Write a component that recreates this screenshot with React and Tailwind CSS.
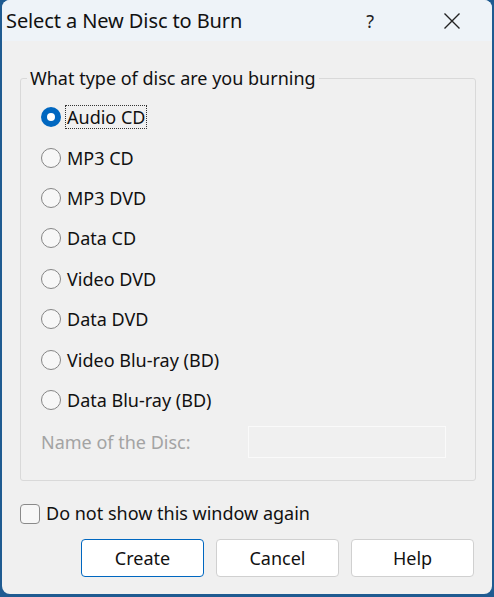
import React from "react";

const options = [
  "Audio CD",
  "MP3 CD",
  "MP3 DVD",
  "Data CD",
  "Video DVD",
  "Data DVD",
  "Video Blu-ray (BD)",
  "Data Blu-ray (BD)",
];

function Radio({ checked }) {
  if (checked) {
    return (
      <span className="w-[20px] h-[20px] rounded-full bg-[#0067c0] flex items-center justify-center shrink-0">
        <span className="w-[8px] h-[8px] rounded-full bg-white" />
      </span>
    );
  }
  return <span className="w-[20px] h-[20px] rounded-full border border-[#858585] bg-[#f7f7f7] shrink-0" />;
}

export default function App() {
  return (
    <div
      className="w-[494px] h-[597px] bg-[#1f5b91] pl-[2px] pr-[2px] pb-[3px]"
      style={{ fontFamily: '"Noto Sans", "Open Sans", sans-serif' }}
    >
      <div className="w-full h-full bg-[#f0f0f0] rounded-[8px] overflow-hidden flex flex-col text-[#000]">
        {/* title bar */}
        <div className="h-[41px] bg-[#eef3f8] flex items-center pl-[4px] shrink-0">
          <span className="text-[20px] leading-none tracking-[-0.1px] text-[#111]">Select a New Disc to Burn</span>
          <span className="ml-auto mr-[69px] text-[18px] text-[#222] leading-none">?</span>
          <svg width="18" height="18" viewBox="0 0 18 18" className="mr-[31px]">
            <path d="M1.5 1.5 L16.5 16.5 M16.5 1.5 L1.5 16.5" stroke="#222" strokeWidth="1.4" fill="none" />
          </svg>
        </div>
        {/* body */}
        <div className="flex-1 flex flex-col pl-[18px] pr-[16px]">
          <div className="relative mt-[37px] h-[403px] border border-[#d9d9d9] rounded-[3px]">
            <span className="absolute left-[6px] top-[-13px] bg-[#f0f0f0] px-[3px] text-[18px] leading-[24px] text-[#111]">
              What type of disc are you burning
            </span>
            <div className="flex flex-col pl-[20px] pt-[18px]">
              {options.map((o, i) => (
                <div key={o} className="h-[40.4px] flex items-center gap-[5px]">
                  <Radio checked={i === 0} />
                  <span
                    className={
                      "text-[18px] leading-[22px] text-[#111] px-[1px] " +
                      (i === 0 ? "outline-1 outline-dotted outline-[#333]" : "")
                    }
                  >
                    {o}
                  </span>
                </div>
              ))}
              <div className="flex items-center mt-[6px]">
                <span className="text-[18px] text-[#a3a3a3] w-[207px]">Name of the Disc:</span>
                <div className="w-[198px] h-[32px] border border-[#fafafa] bg-[#f0f0f0]" />
              </div>
            </div>
          </div>
          <div className="flex items-center gap-[6px] mt-[19px]">
            <span className="w-[20px] h-[20px] border border-[#8a8a8a] rounded-[4px] bg-[#f7f7f7]" />
            <span className="text-[18px] text-[#111]">Do not show this window again</span>
          </div>
          <div className="flex justify-end gap-[12px] mt-[12px] mr-[2px]">
            <button className="w-[123px] h-[38px] bg-white border border-[#0067c0] rounded-[4px] text-[18px] text-[#111]">
              Create
            </button>
            <button className="w-[123px] h-[38px] bg-white border border-[#d0d0d0] rounded-[4px] text-[18px] text-[#111]">
              Cancel
            </button>
            <button className="w-[123px] h-[38px] bg-white border border-[#d0d0d0] rounded-[4px] text-[18px] text-[#111]">
              Help
            </button>
          </div>
        </div>
      </div>
    </div>
  );
}
